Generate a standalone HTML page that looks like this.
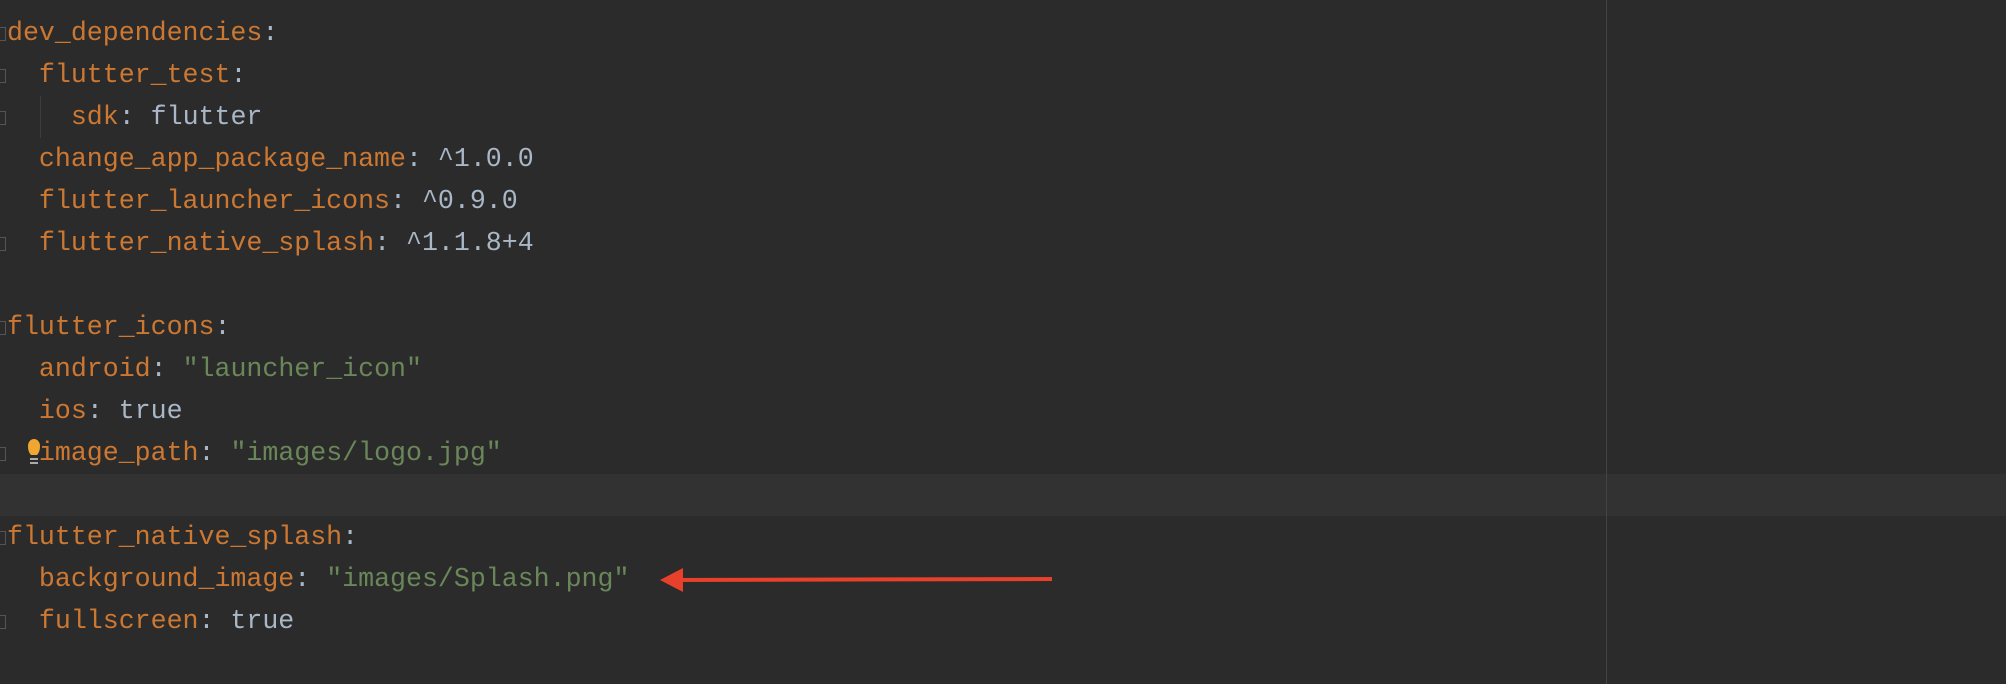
<!DOCTYPE html>
<html><head><style>
html,body{margin:0;padding:0;}
body{width:2006px;height:684px;background:#2b2b2b;position:relative;overflow:hidden;font-family:"Liberation Mono",monospace;font-size:26.6px;}
.l{position:absolute;left:7px;height:42px;line-height:42px;white-space:pre;color:#a9b7c6;}
.k{color:#cc7832}.s{color:#6a8759}
.hl{position:absolute;left:0;width:2006px;top:474px;height:42px;background:#323232;}
.vr{position:absolute;left:1606px;top:0;width:1px;height:684px;background:#444;}
.g{position:absolute;left:0;width:5px;height:12px;border:1px solid #555;border-left:none;}
</style></head><body>
<div class="hl"></div>
<div class="vr"></div>
<div style="position:absolute;left:40px;top:96px;width:1px;height:42px;background:#3d3d3d"></div>
<div class="g" style="top:27px"></div>
<div class="g" style="top:69px"></div>
<div class="g" style="top:111px"></div>
<div class="g" style="top:237px"></div>
<div class="g" style="top:321px"></div>
<div class="g" style="top:447px"></div>
<div class="g" style="top:531px"></div>
<div class="g" style="top:615px"></div>
<div class="l" style="top:12px"><span class="k">dev_dependencies</span>:</div>
<div class="l" style="top:54px">  <span class="k">flutter_test</span>:</div>
<div class="l" style="top:96px">    <span class="k">sdk</span>: flutter</div>
<div class="l" style="top:138px">  <span class="k">change_app_package_name</span>: ^1.0.0</div>
<div class="l" style="top:180px">  <span class="k">flutter_launcher_icons</span>: ^0.9.0</div>
<div class="l" style="top:222px">  <span class="k">flutter_native_splash</span>: ^1.1.8+4</div>
<div class="l" style="top:306px"><span class="k">flutter_icons</span>:</div>
<div class="l" style="top:348px">  <span class="k">android</span>: <span class="s">"launcher_icon"</span></div>
<div class="l" style="top:390px">  <span class="k">ios</span>: true</div>
<div class="l" style="top:432px">  <span class="k">image_path</span>: <span class="s">"images/logo.jpg"</span></div>
<div class="l" style="top:516px"><span class="k">flutter_native_splash</span>:</div>
<div class="l" style="top:558px">  <span class="k">background_image</span>: <span class="s">"images/Splash.png"</span></div>
<div class="l" style="top:600px">  <span class="k">fullscreen</span>: true</div>
<svg style="position:absolute;left:0;top:0" width="2006" height="684">
<path d="M28 446 a6 7 0 1 1 12 0 q0 6 -3 9 h-6 q-3 -3 -3 -9z" fill="#f0a732"/>
<rect x="30" y="458" width="8" height="2" fill="#aaa"/><rect x="30" y="462" width="8" height="2" fill="#aaa"/>
<line x1="675" y1="580" x2="1052" y2="579" stroke="#e8402a" stroke-width="4"/>
<polygon points="660,580 683,568 683,592" fill="#e8402a"/>
</svg>
</body></html>
